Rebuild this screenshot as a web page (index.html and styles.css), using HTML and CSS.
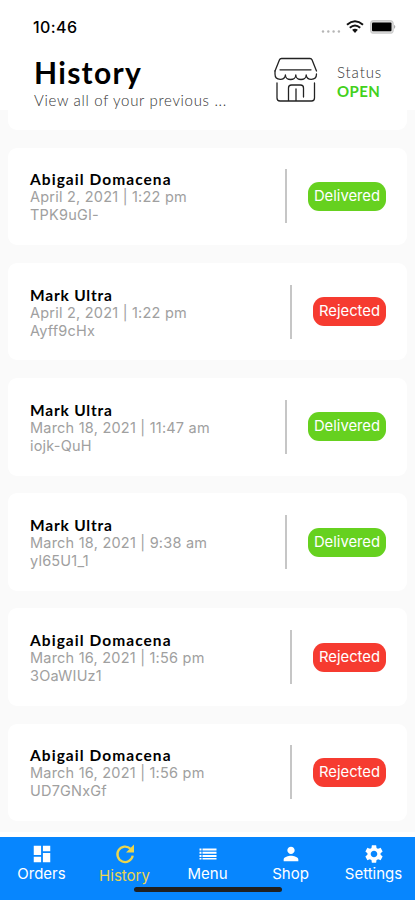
FILE: index.html
```html
<!DOCTYPE html>
<html lang="en">
<head>
<meta charset="utf-8">
<meta name="viewport" content="width=device-width, initial-scale=1">
<title>History</title>
<link rel="stylesheet" href="styles.css">
</head>
<body>
<header class="header">
  <div class="statusbar">
    <span class="time">10:46</span>
    <div class="indicators">
      <svg width="76" height="16" viewBox="0 0 76 16">
        <g fill="#b5b5b5"><circle cx="3" cy="11.5" r="1.2"/><circle cx="8.3" cy="11.5" r="1.2"/><circle cx="13.6" cy="11.5" r="1.2"/><circle cx="18.9" cy="11.5" r="1.2"/></g>
        <g fill="none" stroke="#111" stroke-width="2"><path d="M27 4.7Q35 -2.2 43 4.7"/><path d="M29.8 7.8Q35 3.3 40.2 7.8"/></g>
        <path d="M32.1 9.8Q35 7.8 37.9 9.8L35 13Z" fill="#111"/>
        <rect x="50.6" y="0.6" width="22.6" height="12.6" rx="3.3" fill="#ddd" stroke="#ccc" stroke-width="1.2"/>
        <rect x="52" y="2.6" width="19.5" height="8.6" rx="1" fill="#000"/>
        <path d="M74.3 4.8Q76.2 6.8 74.3 9Z" fill="#888"/>
      </svg>
    </div>
  </div>
  <div class="heading">
    <div class="titles">
      <h1 class="title">History</h1>
      <p class="subtitle">View all of your previous ...</p>
    </div>
    <svg class="store" width="44" height="46" viewBox="0 0 44 46" fill="none" stroke="#222" stroke-width="1.3" stroke-linecap="round" stroke-linejoin="round">
      <path d="M1 14L5.5 2.8Q6 1.5 7.5 1.5H36Q37.500 1.5 38 2.8L42.500 14"/>
      <path d="M6 12.800H37"/>
      <path d="M1 14V17C1 24 11.400 24 11.400 18C11.400 24 21.800 24 21.800 18C21.800 24 32.200 24 32.200 18C32.200 24 42.500 24 42.500 17"/>
      <path d="M3 26V41Q3 44 6 44H37.500Q40.500 44 40.500 41V26M14.500 44V31Q14.500 28 17.500 28H26.500Q29.500 28 29.500 31V40M22 32V44"/>
    </svg>
    <div class="shop-status"><span class="status-label">Status</span><span class="status-open">OPEN</span></div>
  </div>
</header>
<main class="list">
  <article class="card card-cut"></article>
  <article class="card"><div class="info"><h2 class="name">Abigail Domacena</h2><p class="date">April 2, 2021 | 1:22 pm</p><p class="code">TPK9uGI-</p></div><div class="state"><span class="badge delivered">Delivered</span></div></article>
  <article class="card"><div class="info"><h2 class="name mark">Mark Ultra</h2><p class="date">April 2, 2021 | 1:22 pm</p><p class="code">Ayff9cHx</p></div><div class="state"><span class="badge rejected">Rejected</span></div></article>
  <article class="card"><div class="info"><h2 class="name mark">Mark Ultra</h2><p class="date">March 18, 2021 | 11:47 am</p><p class="code">iojk-QuH</p></div><div class="state"><span class="badge delivered">Delivered</span></div></article>
  <article class="card"><div class="info"><h2 class="name mark">Mark Ultra</h2><p class="date">March 18, 2021 | 9:38 am</p><p class="code">yl65U1_1</p></div><div class="state"><span class="badge delivered">Delivered</span></div></article>
  <article class="card"><div class="info"><h2 class="name">Abigail Domacena</h2><p class="date">March 16, 2021 | 1:56 pm</p><p class="code">3OaWIUz1</p></div><div class="state"><span class="badge rejected">Rejected</span></div></article>
  <article class="card"><div class="info"><h2 class="name">Abigail Domacena</h2><p class="date">March 16, 2021 | 1:56 pm</p><p class="code">UD7GNxGf</p></div><div class="state"><span class="badge rejected">Rejected</span></div></article>
</main>
<nav class="nav">
  <a class="tab"><svg width="22" height="22" viewBox="0 0 24 24"><path d="M3 13h8V3H3v10zm0 8h8v-6H3v6zm10 0h8V11h-8v10zm0-18v6h8V3h-8z"/></svg><span>Orders</span></a>
  <a class="tab active"><svg width="22" height="22" viewBox="0 0 22 22"><path d="M16.500 5.800A7.700 7.700 0 1 0 18.700 12.600" fill="none" stroke="currentColor" stroke-width="2.300"/><path d="M20 1.500V9.500H12Z"/></svg><span>History</span></a>
  <a class="tab"><svg width="22" height="22" viewBox="0 0 22 22"><path d="M2.500 5.500h2v2h-2zM5.500 5.500h14v2h-14zM2.500 8.700h2v2h-2zM5.500 8.700h14v2h-14zM2.500 11.900h2v2h-2zM5.500 11.900h14v2h-14zM2.500 15.100h2v1.500h-2zM5.500 15.100h14v1.500h-14z"/></svg><span>Menu</span></a>
  <a class="tab"><svg width="22" height="22" viewBox="0 0 24 24"><path d="M12 12c2.210 0 4-1.790 4-4s-1.790-4-4-4-4 1.790-4 4 1.790 4 4 4zm0 2c-2.670 0-8 1.340-8 4v2h16v-2c0-2.660-5.330-4-8-4z"/></svg><span>Shop</span></a>
  <a class="tab"><svg width="22" height="22" viewBox="0 0 24 24"><path d="M19.140 12.940c.04-.3.06-.61.06-.94 0-.32-.02-.64-.07-.94l2.030-1.580c.18-.14.23-.41.12-.61l-1.920-3.320c-.12-.22-.37-.29-.59-.22l-2.390.96c-.5-.38-1.030-.7-1.620-.94l-.36-2.540c-.04-.24-.24-.41-.48-.41h-3.840c-.24 0-.43.17-.47.41l-.36 2.540c-.59.24-1.130.57-1.620.94l-2.390-.96c-.22-.08-.47 0-.59.22L2.740 8.870c-.12.21-.08.47.12.61l2.030 1.580c-.05.3-.09.63-.09.94s.02.64.07.94l-2.030 1.580c-.18.14-.23.41-.12.61l1.920 3.320c.12.22.37.29.59.22l2.390-.96c.5.38 1.030.7 1.620.94l.36 2.540c.05.24.24.41.48.41h3.840c.24 0 .44-.17.47-.41l.36-2.540c.59-.24 1.130-.56 1.620-.94l2.390.96c.22.08.47 0 .59-.22l1.920-3.320c.12-.22.07-.47-.12-.61l-2.010-1.580zM12 15.600c-1.980 0-3.600-1.620-3.600-3.600s1.620-3.600 3.600-3.600 3.600 1.620 3.600 3.600-1.620 3.600-3.600 3.600z"/></svg><span>Settings</span></a>
  <div class="home-indicator"></div>
</nav>
</body>
</html>
```

FILE: styles.css
```css
* { box-sizing: border-box; margin: 0; padding: 0; }
body {
  width: 415px;
  height: 900px;
  overflow: hidden;
  display: flex;
  flex-direction: column;
  background: #fafafa;
  font-family: Inter, "Liberation Sans", sans-serif;
  color: #000;
}
.header { height: 110px; flex: none; background: #fff; }
.statusbar {
  height: 53px;
  padding: 17px 19px 0 33px;
  display: flex;
  justify-content: space-between;
  align-items: flex-start;
}
.time { font-size: 16px; line-height: 20px; font-weight: 500; letter-spacing: 0.4px; }
.indicators { display: flex; padding-top: 3px; }
.heading { display: flex; padding-left: 34px; height: 56px; }
.titles { width: 240px; }
.title { font: 700 30px/38px Lato, sans-serif; letter-spacing: 1.3px; }
.subtitle { font: 300 15px/18px Lato, sans-serif; letter-spacing: 0.68px; color: #333; white-space: nowrap; }
.store { margin-top: 4px; flex: none; }
.shop-status { display: flex; flex-direction: column; padding: 10px 0 0 19px; font-family: Lato, sans-serif; }
.status-label { font-size: 15px; line-height: 18px; font-weight: 300; color: #333; letter-spacing: 0.9px; }
.status-open { font-size: 15px; line-height: 20px; font-weight: 700; color: #43d11c; letter-spacing: 0.4px; }
.list { flex: 1; display: flex; flex-direction: column; gap: 17.7px; padding: 0 8px; }
.card {
  height: 97.5px;
  flex: none;
  border-radius: 9px;
  background: #fff;
  display: flex;
  justify-content: space-between;
  align-items: center;
  padding: 0 21px 0 22px;
}
.card-cut { height: 20px; border-radius: 0 0 9px 9px; }
.info { padding-top: 2px; color: #a0a0a0; font-size: 14.5px; line-height: 18px; letter-spacing: 0.2px; white-space: nowrap; }
.name { color: #000; font: 700 15.5px/18px Lato, sans-serif; letter-spacing: 1.05px; }
.mark { letter-spacing: 0.8px; }
.date { letter-spacing: 0.22px; }
.state { height: 54px; padding-left: 21px; border-left: 2px solid #c6c6c6; display: flex; align-items: center; }
.badge {
  height: 29px;
  border-radius: 11px;
  color: #fff;
  font-size: 14.8px;
  line-height: 29px;
  text-align: center;
}
.delivered { width: 78px; background: #66d11f; }
.rejected { width: 73px; background: #f63b30; }
.nav {
  position: relative;
  height: 68px;
  flex: none;
  border-top: 5px solid #fff;
  background: #0786fe;
  display: grid;
  grid-template-columns: repeat(5, 83px);
}
.tab { display: flex; flex-direction: column; align-items: center; padding-top: 6px; color: #fff; font-size: 15px; line-height: 18px; }
.tab svg { fill: currentColor; }
.active { color: #ecd54d; }
.active span { margin-top: 2px; }
.home-indicator {
  position: absolute;
  left: 134px;
  top: 50px;
  width: 148px;
  height: 5px;
  border-radius: 3px;
  background: #202020;
}
```
